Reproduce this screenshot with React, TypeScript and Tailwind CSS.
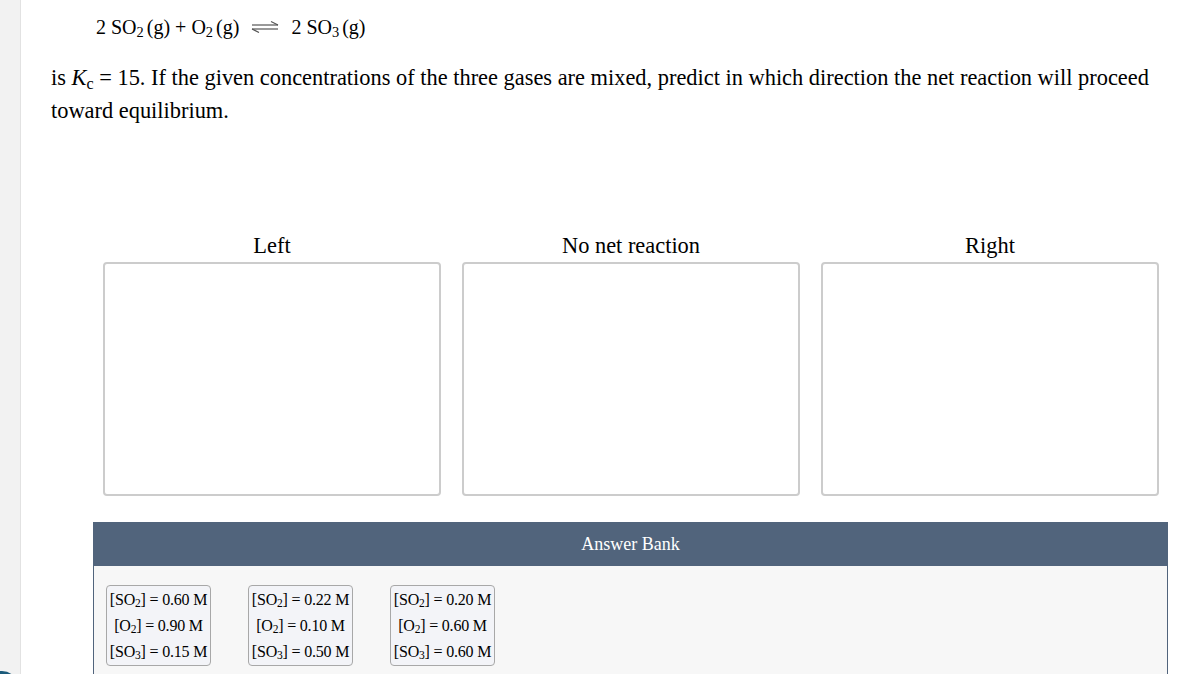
import React from "react";

const serif = { fontFamily: '"Liberation Serif", "Times New Roman", serif' };

function Sub({ children }: { children: React.ReactNode }) {
  return <sub className="text-[0.72em] relative top-[0.22em] align-baseline">{children}</sub>;
}

function Card({ a, b, c }: { a: string; b: string; c: string }) {
  return (
    <div className="w-[105px] h-[81px] rounded-[4px] border border-[#a8a8a8] bg-[#f3f4f8] flex flex-col items-center justify-center text-[16px] leading-[26px] text-black whitespace-nowrap tracking-[-0.2px]">
      <div>[SO<Sub>2</Sub>] = {a} M</div>
      <div>[O<Sub>2</Sub>] = {b} M</div>
      <div>[SO<Sub>3</Sub>] = {c} M</div>
    </div>
  );
}

export default function App() {
  return (
    <div className="relative w-[1194px] h-[674px] overflow-hidden bg-white flex" style={serif}>
      <div className="w-[21px] shrink-0 bg-[#f2f2f2] border-r border-[#e2e2e2]" />
      <div className="flex-1 flex flex-col">
        <div className="ml-[75px] mt-[13px] h-[28px] flex items-center text-[20px] text-black">
          <span>2 SO<Sub>2</Sub><span className="ml-[3px]">(g)</span> + O<Sub>2</Sub><span className="ml-[3px]">(g)</span></span>
          <svg width="34" height="14" viewBox="0 0 34 14" className="mx-[9px]">
            <line x1="4" y1="5" x2="30" y2="5" stroke="#555" strokeWidth="1.2" />
            <line x1="23" y1="1.5" x2="30" y2="5" stroke="#555" strokeWidth="1.2" />
            <line x1="4" y1="9" x2="30" y2="9" stroke="#555" strokeWidth="1.2" />
            <line x1="4" y1="9" x2="11" y2="12.5" stroke="#555" strokeWidth="1.2" />
          </svg>
          <span>2 SO<Sub>3</Sub><span className="ml-[3px]">(g)</span></span>
        </div>
        <p className="ml-[30px] mt-[20px] mr-[20px] text-[22.4px] leading-[33px] text-black">
          is <i>K</i><Sub>c</Sub> = 15. If the given concentrations of the three gases are mixed, predict in which direction the net reaction will proceed toward equilibrium.
        </p>
        <div className="ml-[82px] mt-[106px] grid grid-cols-[338px_338px_338px] gap-x-[21px]">
          {["Left", "No net reaction", "Right"].map((t) => (
            <div key={t} className="flex flex-col">
              <div className="text-center text-[22.4px] leading-[26px] text-black">{t}</div>
              <div className="mt-[3px] h-[234px] rounded-[4px] border-2 border-[#cccccc] bg-white" />
            </div>
          ))}
        </div>
        <div className="ml-[72px] mt-[26px] w-[1075px] flex flex-col">
          <div className="h-[44px] bg-[#51647c] flex items-center justify-center text-white text-[18px]">
            Answer Bank
          </div>
          <div className="h-[200px] bg-[#f7f7f7] border-x border-[#51647c] pl-[12px] pt-[19px] flex gap-[37px] items-start">
            <Card a="0.60" b="0.90" c="0.15" />
            <Card a="0.22" b="0.10" c="0.50" />
            <Card a="0.20" b="0.60" c="0.60" />
          </div>
        </div>
      </div>
      <div className="absolute left-[-14px] top-[671px] w-[32px] h-[32px] rounded-full bg-[#1b5a7a]" />
    </div>
  );
}
